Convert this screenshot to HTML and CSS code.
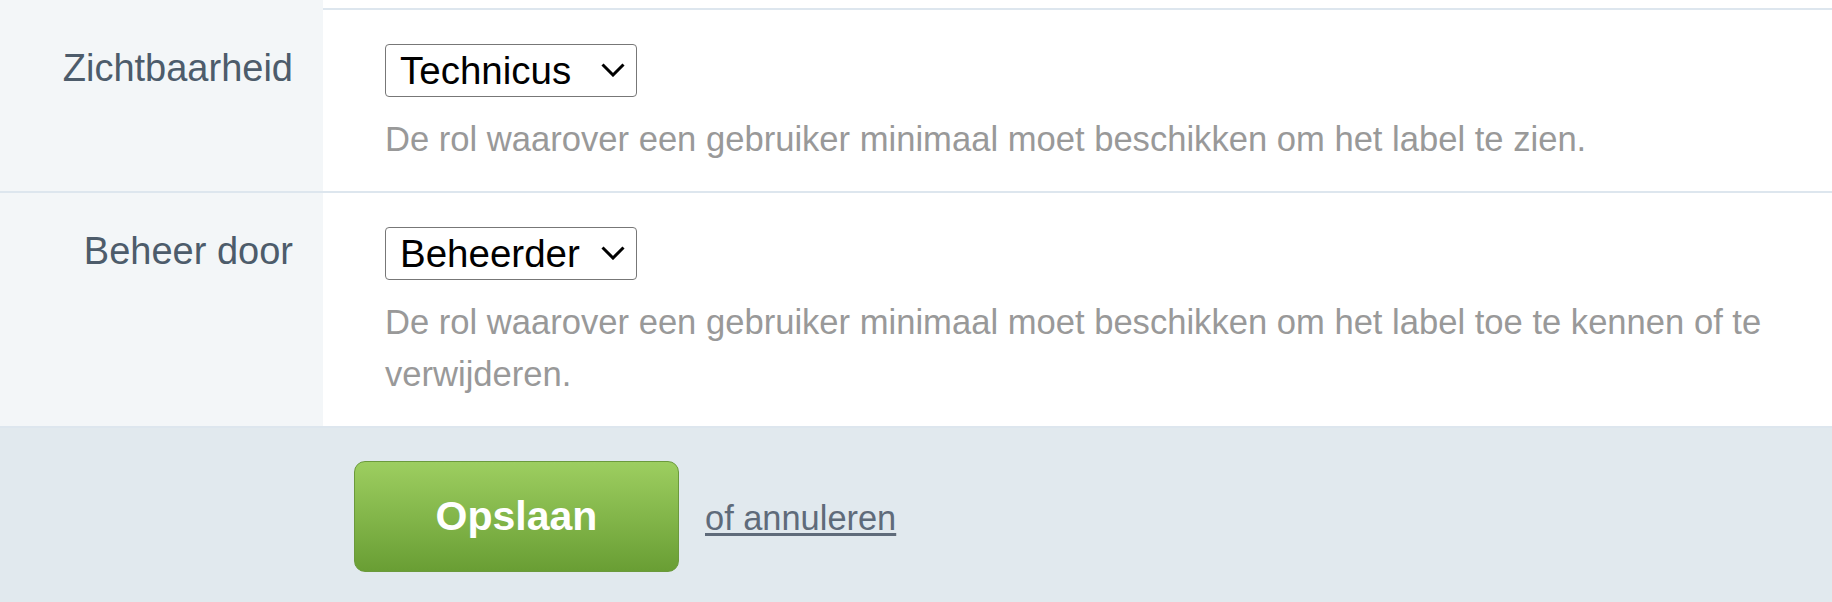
FILE: index.html
```html
<!DOCTYPE html>
<html lang="nl">
<head>
    <meta charset="UTF-8">
    <meta name="viewport" content="width=device-width, initial-scale=1.0">
    <title>Label bewerken</title>
    <link rel="stylesheet" href="styles.css">
</head>
<body>
    <form class="label-form">
        <div class="row row-stub">
            <div class="label-col"></div>
            <div class="field-col"></div>
        </div>
        <div class="row">
            <div class="label-col">
                <label for="visibility">Zichtbaarheid</label>
            </div>
            <div class="field-col">
                <span class="select-wrap">
                    <select id="visibility" name="visibility">
                        <option>Technicus</option>
                        <option>Beheerder</option>
                    </select>
                    <svg class="chevron" width="24" height="14" viewBox="0 0 24 14"><polyline points="1.5,1.5 12,12 22.5,1.5" fill="none" stroke="#000" stroke-width="3"/></svg>
                </span>
                <p class="hint">De rol waarover een gebruiker minimaal moet beschikken om het label te zien.</p>
            </div>
        </div>
        <div class="row">
            <div class="label-col">
                <label for="manage">Beheer door</label>
            </div>
            <div class="field-col">
                <span class="select-wrap">
                    <select id="manage" name="manage">
                        <option>Technicus</option>
                        <option selected>Beheerder</option>
                    </select>
                    <svg class="chevron" width="24" height="14" viewBox="0 0 24 14"><polyline points="1.5,1.5 12,12 22.5,1.5" fill="none" stroke="#000" stroke-width="3"/></svg>
                </span>
                <p class="hint">De rol waarover een gebruiker minimaal moet beschikken om het label toe te kennen of te verwijderen.</p>
            </div>
        </div>
        <div class="actions">
            <button type="submit" class="save-button">Opslaan</button>
            <a href="#" class="cancel-link">of annuleren</a>
        </div>
    </form>
</body>
</html>
```

FILE: styles.css
```css
body, html {
    margin: 0;
    padding: 0;
    height: 100%;
    font-family: "Liberation Sans", Arial, Helvetica, sans-serif;
    background-color: #e1e9ee;
}
.label-form {
    margin: 0;
}
.row {
    display: flex;
    border-bottom: 2px solid #dde6ee;
}
.row-stub {
    height: 8px;
}
.row-stub .field-col {
    padding: 0;
}
.label-col {
    width: 323px;
    flex-shrink: 0;
    box-sizing: border-box;
    padding: 32px 30px 0 0;
    text-align: right;
    background-color: #f3f6f8;
}
.label-col label {
    font-size: 38px;
    line-height: 53px;
    color: #4d5c6b;
}
.field-col {
    flex: 1;
    background-color: white;
    padding: 34px 40px 25px 62px;
}
.select-wrap {
    position: relative;
    display: inline-block;
}
.select-wrap select {
    appearance: none;
    -webkit-appearance: none;
    width: 252px;
    height: 53px;
    box-sizing: border-box;
    margin: 0;
    padding: 0 0 0 14px;
    font-family: inherit;
    font-size: 38.5px;
    color: black;
    background-color: white;
    border: 1.5px solid #777;
    border-radius: 4px;
}
.chevron {
    position: absolute;
    right: 12px;
    top: 19px;
    pointer-events: none;
}
.hint {
    margin: 17px 0 0 0;
    font-size: 34.6px;
    line-height: 1.5;
    color: #999;
}
.actions {
    display: flex;
    align-items: baseline;
    padding: 33px 0 30px 354px;
}
.save-button {
    width: 325px;
    height: 111px;
    box-sizing: border-box;
    padding: 0;
    font-family: inherit;
    font-size: 41px;
    font-weight: bold;
    color: white;
    background: linear-gradient(#9dce60, #699e34);
    border: 1.5px solid #6b9a3c;
    border-radius: 11px;
    cursor: pointer;
}
.cancel-link {
    margin-left: 26px;
    font-size: 34.4px;
    color: #5f6b7a;
    text-decoration: underline;
    text-underline-offset: 3px;
}
```
